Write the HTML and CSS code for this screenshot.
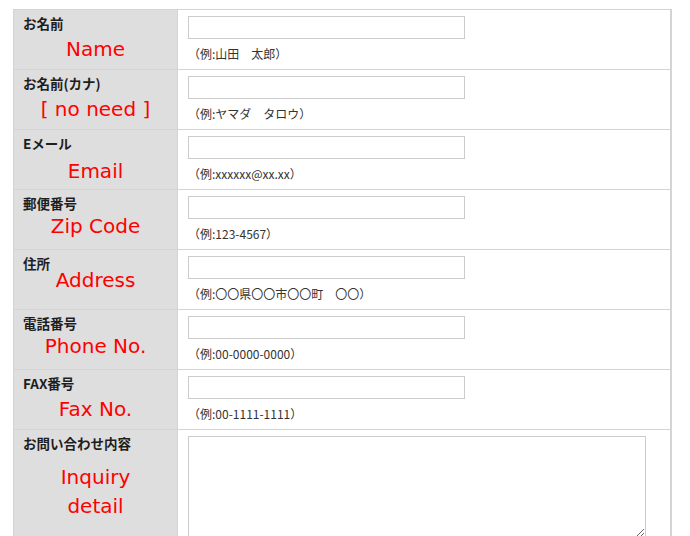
FILE: index.html
```html
<!DOCTYPE html>
<html lang="ja">
<head>
    <meta charset="UTF-8">
    <title>お問い合わせ</title>
    <link rel="stylesheet" href="styles.css">
</head>
<body>
    <form class="form">
        <div class="label">
            <div class="name">お名前</div>
            <div class="note">Name</div>
        </div>
        <div class="field">
            <input type="text" class="box">
            <div class="hint">（例:山田　太郎）</div>
        </div>

        <div class="label">
            <div class="name">お名前(カナ)</div>
            <div class="note">[ no need ]</div>
        </div>
        <div class="field">
            <input type="text" class="box">
            <div class="hint">（例:ヤマダ　タロウ）</div>
        </div>

        <div class="label">
            <div class="name">Eメール</div>
            <div class="note note-low">Email</div>
        </div>
        <div class="field">
            <input type="text" class="box">
            <div class="hint">（例:xxxxxx@xx.xx）</div>
        </div>

        <div class="label">
            <div class="name">郵便番号</div>
            <div class="note note-up">Zip Code</div>
        </div>
        <div class="field">
            <input type="text" class="box">
            <div class="hint">（例:123-4567）</div>
        </div>

        <div class="label">
            <div class="name">住所</div>
            <div class="note note-high">Address</div>
        </div>
        <div class="field">
            <input type="text" class="box">
            <div class="hint">（例:〇〇県〇〇市〇〇町　〇〇）</div>
        </div>

        <div class="label">
            <div class="name">電話番号</div>
            <div class="note note-up">Phone No.</div>
        </div>
        <div class="field">
            <input type="text" class="box">
            <div class="hint">（例:00-0000-0000）</div>
        </div>

        <div class="label">
            <div class="name">FAX番号</div>
            <div class="note">Fax No.</div>
        </div>
        <div class="field">
            <input type="text" class="box">
            <div class="hint">（例:00-1111-1111）</div>
        </div>

        <div class="label">
            <div class="name">お問い合わせ内容</div>
            <div class="note note-inquiry">Inquiry<br>detail</div>
        </div>
        <div class="field">
            <textarea class="area"></textarea>
        </div>
    </form>
</body>
</html>
```

FILE: styles.css
```css
body {
    margin: 9px 0 0 13px;
    background-color: white;
    font-family: "Noto Sans CJK JP", "Noto Sans", sans-serif;
    overflow: hidden;
}

.form {
    display: grid;
    grid-template-columns: 163px 492px;
    grid-template-rows: repeat(7, 59px) 130px;
    gap: 1px;
    padding: 1px;
    width: 657px;
    background-color: rgb(212, 212, 212);
}

.label {
    background-color: rgb(222, 222, 222);
    padding: 4px 9px 0 9px;
}

.name {
    font-size: 13.5px;
    line-height: 18px;
    font-weight: bold;
    color: #1e1e1e;
}

.note {
    font-family: "DejaVu Sans", sans-serif;
    font-size: 20px;
    line-height: 29px;
    color: #ff0000;
    text-align: center;
    margin-top: 3px;
}
.note-low {
    margin-top: 5px;
}
.note-up {
    margin-top: 0;
}
.note-high {
    margin-top: -6px;
}
.note-inquiry {
    margin-top: 11px;
}

.field {
    background-color: white;
    padding: 6px 0 0 10px;
}

.box {
    display: block;
    box-sizing: border-box;
    width: 277px;
    height: 23px;
    margin: 0;
    border: 1px solid rgb(204, 204, 204);
    background: white;
}

.hint {
    font-size: 12px;
    line-height: 17px;
    margin-top: 6px;
    color: #333;
}

.area {
    display: block;
    box-sizing: border-box;
    width: 458px;
    height: 102px;
    margin: 0;
    border: 1px solid rgb(204, 204, 204);
    resize: both;
}
```
